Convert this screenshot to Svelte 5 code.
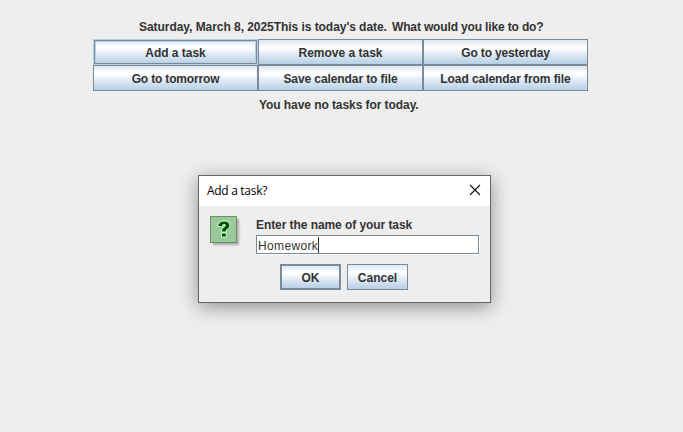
<script>
  const actions = [
    { label: 'Add a task', spacing: -0.03, focused: true },
    { label: 'Remove a task', spacing: 0 },
    { label: 'Go to yesterday', spacing: -0.15 },
    { label: 'Go to tomorrow', spacing: -0.17 },
    { label: 'Save calendar to file', spacing: -0.09 },
    { label: 'Load calendar from file', spacing: -0.07 }
  ];
  let task = $state('Homework');
</script>

<main>
  <header>
    <span class="date">Saturday, March 8, 2025This is today's date.</span>
    <span class="question">What would you like to do?</span>
  </header>
  <div class="grid">
    {#each actions as action}
      <button class:focused={action.focused}><span style:letter-spacing="{action.spacing}px">{action.label}</span></button>
    {/each}
  </div>
  <p class="status">You have no tasks for today.</p>

  <div class="dialog" role="dialog" aria-label="Add a task?">
    <div class="titlebar">
      <span class="title">Add a task?</span>
      <svg class="close" width="12" height="12" viewBox="0 0 12 12" aria-hidden="true">
        <path d="M1 1 L11 11 M11 1 L1 11" stroke="#111" stroke-width="1.1" fill="none" />
      </svg>
    </div>
    <div class="body">
      <svg class="icon" width="32" height="32" viewBox="0 0 32 32" aria-hidden="true">
        <defs>
          <filter id="soft" x="-20%" y="-20%" width="140%" height="140%"><feGaussianBlur stdDeviation="1" /></filter>
        </defs>
        <rect x="3" y="3" width="26" height="26" fill="#000" opacity=".28" filter="url(#soft)" />
        <rect x=".5" y=".5" width="26" height="26" fill="#9bc89b" stroke="#669066" />
        <path d="M8.2 9.9 C8.6 6.7 10.8 5.4 14.2 5.4 C17.7 5.4 19.4 7 19.4 9.3 C19.4 11.4 18.2 12.3 16.9 13.2 C16 13.9 15.8 14.3 15.8 15.6 L12 15.6 C12 13.3 12.6 12.4 14 11.4 C15.2 10.6 15.6 10.2 15.6 9.4 C15.6 8.6 15 8.1 14 8.1 C12.8 8.1 12.2 8.8 12 10.2 Z M12 17.5 H15.8 V20.6 H12 Z" fill="#005000" stroke="#ccffcc" stroke-width="1.8" paint-order="stroke" stroke-linejoin="round" />
      </svg>
      <div class="form">
        <div class="prompt">Enter the name of your task</div>
        <div class="field"><span>{task}</span><i></i></div>
      </div>
    </div>
    <div class="buttons">
      <button class="default"><span>OK</span></button>
      <button><span>Cancel</span></button>
    </div>
  </div>
</main>

<style>
  :global(body) { background: #eeeeee; overflow: hidden; }
  main {
    position: relative;
    width: 683px;
    height: 432px;
    overflow: hidden;
    background: #eeeeee;
    color: #333333;
    font: bold 12px/16px "Liberation Sans", Arial, sans-serif;
    white-space: nowrap;
  }
  header { display: flex; gap: 5px; padding: 19px 0 0 139px; height: 20px; }
  .date { width: 248px; letter-spacing: -0.05px; }
  .question { letter-spacing: -0.15px; }
  .grid {
    display: grid;
    grid-template-columns: repeat(3, 165px);
    grid-template-rows: repeat(2, 26px);
    margin-left: 93px;
    width: 495px;
  }
  button {
    box-sizing: border-box;
    margin: 0;
    padding: 1px 0 0;
    border: 1px solid #7a8a99;
    border-radius: 0;
    background: linear-gradient(#dde8f3 0%, #ffffff 30%, #ffffff 34%, #dde8f3 62%, #b8cfe5 100%);
    color: #333333;
    font: inherit;
    text-align: center;
  }
  .focused {
    border-color: #b8cfe5;
    box-shadow: inset 0 0 0 1px #7a8a99, inset 0 0 0 2px #b8cfe5;
  }
  .status { margin: 6px 0 0 259px; letter-spacing: -0.07px; }
  .dialog {
    position: absolute;
    left: 198px;
    top: 175px;
    box-sizing: border-box;
    width: 293px;
    height: 128px;
    border: 1px solid #666666;
    background: #eeeeee;
    box-shadow: 0 4px 18px rgba(0, 0, 0, .4);
  }
  .titlebar {
    display: flex;
    align-items: center;
    justify-content: space-between;
    height: 30px;
    padding: 0 9px 0 8px;
    background: #ffffff;
    color: #000;
    font: 12px/16px "Open Sans", "Noto Sans", sans-serif;
  }
  .title { letter-spacing: -0.3px; }
  .close { display: block; margin-bottom: 2px; }
  .body { display: flex; padding: 10px 11px 0; gap: 14px; height: 39px; }
  .icon { display: block; flex: none; }
  .form { width: 223px; }
  .prompt { height: 19px; line-height: 19px; letter-spacing: -0.07px; }
  .field {
    display: flex;
    box-sizing: border-box;
    width: 223px;
    height: 19px;
    border: 1px solid #7a8a99;
    box-shadow: 1px 1px #fff;
    background: #fff;
    padding-left: 1px;
    font-weight: normal;
    line-height: 20px;
  }
  .field span { letter-spacing: 0.35px; }
  .field i { width: 1px; height: 16px; margin-top: 1px; background: #333; }
  .buttons { display: flex; gap: 6px; padding: 9px 0 0 81px; }
  .buttons button { width: 61px; height: 26px; }
  .buttons .default { border-width: 2px; }
</style>
